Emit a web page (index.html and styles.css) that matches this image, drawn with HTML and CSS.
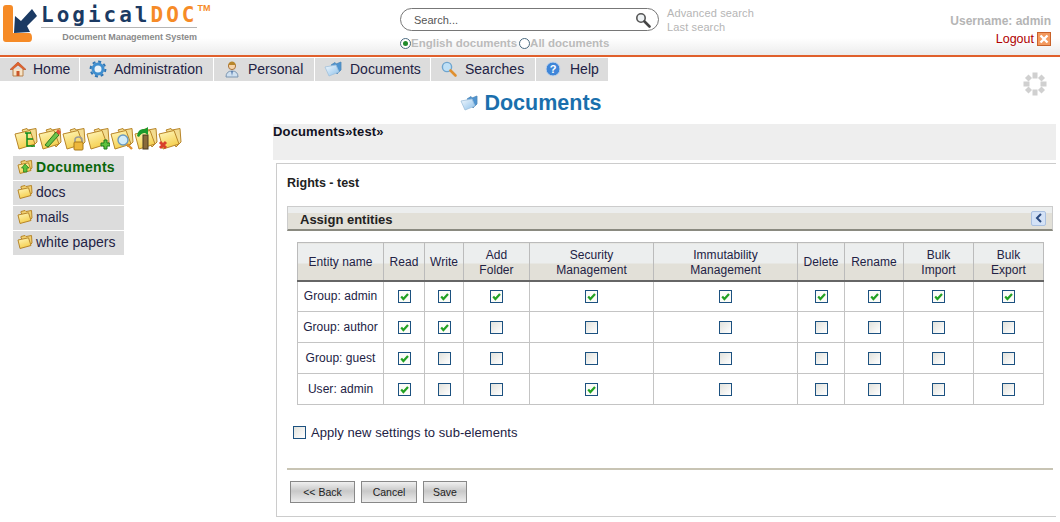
FILE: index.html
```html
<!DOCTYPE html>
<html lang="en">
<head>
    <meta charset="UTF-8">
    <title>LogicalDOC - Documents</title>
    <link rel="stylesheet" href="styles.css">
</head>
<body>
    <svg class="defs" width="0" height="0">
        <defs>
            <linearGradient id="folderFill" x1="0" y1="0" x2="0.4" y2="1">
                <stop offset="0" stop-color="#fff8c0"/>
                <stop offset="1" stop-color="#f5cf4e"/>
            </linearGradient>
            <linearGradient id="blueFill" x1="0" y1="0" x2="1" y2="1">
                <stop offset="0" stop-color="#f4f9fd"/>
                <stop offset="1" stop-color="#8cc0ea"/>
            </linearGradient>
            <symbol id="folder" viewBox="0 0 16 16">
                <path d="M4 4 L4 2.5 L8 1.5 L9 2.5 L14.5 1.5 L15 9 L12 12 Z" fill="#f0d070" stroke="#b8862a" stroke-width="1"/>
                <path d="M1 6 L11.5 3.8 L14 11.5 L3 14.5 Z" fill="url(#folderFill)" stroke="#b8862a" stroke-width="1" stroke-linejoin="round"/>
            </symbol>
            <symbol id="bigfolder" viewBox="0 0 24 24">
                <path d="M8 3 L13 1.5 L14 3 L22 1.5 L23 15 L18 20 Z" fill="#f3dc90" stroke="#b8862a"/>
                <path d="M1 7 L16 3.5 L21 17 L5 22 Z" fill="url(#folderFill)" stroke="#b8862a" stroke-linejoin="round"/>
            </symbol>
            <symbol id="bluefolder" viewBox="0 0 18 16">
                <path d="M7 4 L11 1.5 L12 3 L17 1 L17 9 L13 13 Z" fill="#4f94d0" stroke="#4f88b8" stroke-width=".8"/>
                <path d="M1 6 L12 4 L15 11 L5 15 Z" fill="url(#blueFill)" stroke="#9fc0dc" stroke-width=".8" stroke-linejoin="round"/>
            </symbol>
            <symbol id="check" viewBox="0 0 13 13">
                <path d="M3.2 6.5 L5.4 9 L10 4" fill="none" stroke="#22a122" stroke-width="2.2"/>
            </symbol>
        </defs>
    </svg>

    <header class="top">
        <div class="logo">
            <svg class="logo-mark" width="38" height="42" viewBox="0 0 38 42">
                <path d="M1 7 Q1 4 4 4 H8 Q11 4 11 7 V32 H27 Q30 32 30 37 Q30 41 27 41 H4 Q1 41 1 38 Z" fill="#f68b27"/>
                <path d="M13 15 L19 20 L30 8 L35 15 L25 25 L28 31 L12 32 Z" fill="#1b3a63"/>
            </svg>
            <div class="logo-text">
                <div class="logo-name"><span>Logical</span><span class="logo-doc">DOC</span><sup class="logo-tm">TM</sup></div>
                <div class="logo-sub">Document Management System</div>
            </div>
        </div>
        <div class="search">
            <div class="search-row">
                <div class="search-box">
                    <span>Search...</span>
                    <svg width="16" height="16" viewBox="0 0 16 16">
                        <circle cx="6" cy="6" r="4.2" fill="#eef2f4" stroke="#555" stroke-width="1.6"/>
                        <path d="M9.5 9.5 L14.5 14.5" stroke="#444" stroke-width="2.6" stroke-linecap="round"/>
                    </svg>
                </div>
                <div class="search-links">
                    <a>Advanced search</a>
                    <a>Last search</a>
                </div>
            </div>
            <div class="search-scope">
                <span class="radio on"></span><span>English documents</span>
                <span class="radio second"></span><span>All documents</span>
            </div>
        </div>
        <div class="user">
            <div class="user-name">Username: admin</div>
            <div class="logout">Logout
                <svg width="14" height="14" viewBox="0 0 14 14">
                    <rect x=".5" y=".5" width="13" height="13" fill="#f39a5e" stroke="#c9622a"/>
                    <path d="M3.5 3.5 L10.5 10.5 M10.5 3.5 L3.5 10.5" stroke="#fff" stroke-width="2.4"/>
                </svg>
            </div>
        </div>
    </header>

    <nav class="menu">
        <a class="menu-item w-home">
            <svg width="18" height="18" viewBox="0 0 18 18">
                <path d="M4 9 V16 H14 V9" fill="#f6e3c6" stroke="#b9814a"/>
                <path d="M1 9.5 L9 2 L17 9.5 L14.5 9.5 L9 5 L3.5 9.5 Z" fill="#e2632b" stroke="#b7461c" stroke-width=".6"/>
                <rect x="7.5" y="11" width="3" height="5" fill="#c9562a"/>
            </svg>
            Home</a>
        <a class="menu-item w-admin">
            <svg width="18" height="18" viewBox="0 0 18 18">
                <circle cx="9" cy="9" r="5" fill="#eaf3fa" stroke="#3f8fd0" stroke-width="3"/>
                <circle cx="9" cy="9" r="7.4" fill="none" stroke="#2e75b5" stroke-width="2" stroke-dasharray="3 2.8"/>
            </svg>
            Administration</a>
        <a class="menu-item w-personal">
            <svg width="18" height="18" viewBox="0 0 18 18">
                <path d="M3 17 Q3 11 9 11 Q15 11 15 17 Z" fill="#cfe0f0" stroke="#7b95b0"/>
                <path d="M8 11 L9 16 L10 11 Z" fill="#5a7fb0"/>
                <circle cx="9" cy="6" r="3.6" fill="#f6d3a8" stroke="#a8743c"/>
                <path d="M5.4 5 Q6 1.5 9 1.5 Q12 1.5 12.6 5 Z" fill="#b8862a"/>
            </svg>
            Personal</a>
        <a class="menu-item w-docs">
            <svg width="18" height="16" viewBox="0 0 18 16"><use href="#bluefolder"/></svg>
            Documents</a>
        <a class="menu-item w-search">
            <svg width="18" height="18" viewBox="0 0 18 18">
                <circle cx="7" cy="7" r="4.6" fill="#bfe0f6" stroke="#6fa5cf" stroke-width="1.4"/>
                <path d="M10.5 10.5 L15.5 15.5" stroke="#e09030" stroke-width="2.6" stroke-linecap="round"/>
            </svg>
            Searches</a>
        <a class="menu-item w-help">
            <svg width="16" height="16" viewBox="0 0 16 16">
                <circle cx="8" cy="8" r="7" fill="#3f86d8" stroke="#c6d6ea"/>
                <text x="8" y="11.5" class="help-mark">?</text>
            </svg>
            Help</a>
        <svg class="spinner" width="24" height="24" viewBox="0 0 24 24">
            <g fill="#d0d0d0">
                <rect x="9.5" y="0.5" width="5" height="6"/>
                <rect x="9.5" y="17.5" width="5" height="6"/>
                <rect x="0.5" y="9.5" width="6" height="5"/>
                <rect x="17.5" y="9.5" width="6" height="5"/>
                <rect x="3" y="3.5" width="5" height="5" transform="rotate(45 5.5 6)"/>
                <rect x="16" y="3.5" width="5" height="5" transform="rotate(45 18.5 6)"/>
                <rect x="3" y="15.5" width="5" height="5" transform="rotate(45 5.5 18)"/>
                <rect x="16" y="15.5" width="5" height="5" transform="rotate(45 18.5 18)"/>
            </g>
        </svg>
    </nav>

    <h1 class="title">
        <svg width="18" height="16" viewBox="0 0 18 16"><use href="#bluefolder"/></svg>
        Documents
    </h1>

    <div class="main">
        <aside class="side">
            <div class="tools">
                <svg width="24" height="24" viewBox="0 0 24 24"><use href="#bigfolder"/><path d="M11 6 H17 M13 6 V19 H21 M13 12 H19" fill="none" stroke="#0a8a1a" stroke-width="1.5"/></svg>
                <svg width="24" height="24" viewBox="0 0 24 24"><use href="#bigfolder"/><path d="M7 18 L18 5 L21 8 L10 20 Z" fill="#6cc24a" stroke="#2c7a1c"/><path d="M18 5 L20 2 L23 5 L21 8 Z" fill="#e2503a"/></svg>
                <svg width="24" height="24" viewBox="0 0 24 24"><use href="#bigfolder"/><path d="M13 16 V13 Q13 10 16.5 10 Q20 10 20 13 V16" fill="none" stroke="#999" stroke-width="1.5"/><rect x="12" y="15" width="9" height="8" rx="1" fill="#eeb83c" stroke="#a87818"/></svg>
                <svg width="24" height="24" viewBox="0 0 24 24"><use href="#bigfolder"/><path d="M15 16 H18 V13 H21 V16 H24 V19 H21 V22 H18 V19 H15 Z" fill="#5ec23c" stroke="#1c7a1c"/></svg>
                <svg width="24" height="24" viewBox="0 0 24 24"><use href="#bigfolder"/><circle cx="13" cy="13" r="5" fill="#d2ecfa" stroke="#6a9ac0" stroke-width="1.4"/><path d="M17 17 L22 22" stroke="#e09030" stroke-width="2.4"/></svg>
                <svg width="24" height="24" viewBox="0 0 24 24"><use href="#bigfolder"/><rect x="9" y="8" width="5" height="14" fill="#8a6a3a" stroke="#4a3a20"/><path d="M3 9 Q4 1 11 2 L14 0 L14 8 L11 6 Q7 6 5 10 Z" fill="#1c9a2c"/></svg>
                <svg width="24" height="24" viewBox="0 0 24 24"><use href="#bigfolder"/><path d="M2 15 L8 21 M8 15 L2 21" stroke="#d8402a" stroke-width="3"/></svg>
            </div>
            <ul class="tree">
                <li class="tree-item current">
                    <svg width="16" height="16" viewBox="0 0 16 16"><use href="#folder"/><path d="M8 5 L12 9 H10 V13 H6.5 V9 H4.5 Z" fill="#5ec23c" stroke="#1c7a1c" stroke-width=".7"/></svg>
                    Documents</li>
                <li class="tree-item"><svg width="16" height="16" viewBox="0 0 16 16"><use href="#folder"/></svg>docs</li>
                <li class="tree-item"><svg width="16" height="16" viewBox="0 0 16 16"><use href="#folder"/></svg>mails</li>
                <li class="tree-item"><svg width="16" height="16" viewBox="0 0 16 16"><use href="#folder"/></svg>white papers</li>
            </ul>
        </aside>

        <section class="content">
            <div class="crumbs">Documents»test»</div>
            <div class="panel">
                <h2 class="panel-title">Rights - test</h2>
                <div class="bar">
                    <span>Assign entities</span>
                    <span class="collapse">
                        <svg width="8" height="10" viewBox="0 0 8 10"><path d="M6 1 L2 5 L6 9" fill="none" stroke="#2a4a80" stroke-width="2"/></svg>
                    </span>
                </div>
                <table class="rights">
                    <colgroup>
                        <col class="c-name"><col class="c-read"><col class="c-write"><col class="c-add"><col class="c-sec"><col class="c-imm"><col class="c-del"><col class="c-ren"><col class="c-imp"><col class="c-exp">
                    </colgroup>
                    <thead>
                        <tr>
                            <th>Entity name</th><th>Read</th><th>Write</th><th>Add<br>Folder</th><th>Security<br>Management</th><th>Immutability<br>Management</th><th>Delete</th><th>Rename</th><th>Bulk<br>Import</th><th>Bulk<br>Export</th>
                        </tr>
                    </thead>
                    <tbody>
                        <tr>
                            <td>Group: admin</td>
                            <td><span class="box on"></span></td><td><span class="box on"></span></td><td><span class="box on"></span></td><td><span class="box on"></span></td><td><span class="box on"></span></td><td><span class="box on"></span></td><td><span class="box on"></span></td><td><span class="box on"></span></td><td><span class="box on"></span></td>
                        </tr>
                        <tr>
                            <td>Group: author</td>
                            <td><span class="box on"></span></td><td><span class="box on"></span></td><td><span class="box"></span></td><td><span class="box"></span></td><td><span class="box"></span></td><td><span class="box"></span></td><td><span class="box"></span></td><td><span class="box"></span></td><td><span class="box"></span></td>
                        </tr>
                        <tr>
                            <td>Group: guest</td>
                            <td><span class="box on"></span></td><td><span class="box"></span></td><td><span class="box"></span></td><td><span class="box"></span></td><td><span class="box"></span></td><td><span class="box"></span></td><td><span class="box"></span></td><td><span class="box"></span></td><td><span class="box"></span></td>
                        </tr>
                        <tr>
                            <td>User: admin</td>
                            <td><span class="box on"></span></td><td><span class="box"></span></td><td><span class="box"></span></td><td><span class="box on"></span></td><td><span class="box"></span></td><td><span class="box"></span></td><td><span class="box"></span></td><td><span class="box"></span></td><td><span class="box"></span></td>
                        </tr>
                    </tbody>
                </table>
                <label class="apply"><span class="box"></span>Apply new settings to sub-elements</label>
                <div class="actions">
                    <button class="btn btn-back">&lt;&lt; Back</button>
                    <button class="btn btn-cancel">Cancel</button>
                    <button class="btn btn-save">Save</button>
                </div>
            </div>
        </section>
    </div>

    <script>
        // Checkmarks are the same svg everywhere, fill them in here
        var boxes = document.querySelectorAll('.box.on');
        for (var i = 0; i < boxes.length; i++) {
            boxes[i].innerHTML = '<svg width="13" height="13" viewBox="0 0 13 13"><use href="#check"/></svg>';
        }
    </script>
</body>
</html>
```
FILE: styles.css
```css
* {
    box-sizing: border-box;
}

body {
    margin: 0;
    font-family: "Liberation Sans", Arial, sans-serif;
    font-size: 12px;
    color: #222244;
    background: #fff;
    overflow: hidden;
}

.defs {
    position: absolute;
}

/* Header */
.top {
    height: 57px;
    display: flex;
    border-bottom: 2px solid #e0602c;
    background: linear-gradient(to bottom, #fff 0, #fff 38px, #ececec 55px);
}

.logo {
    width: 400px;
    display: flex;
    padding: 1px 0 0 2px;
}

.logo-mark {
    flex: none;
}

.logo-text {
    padding: 2px 0 0 1px;
}

.logo-name {
    font-family: "DejaVu Sans Mono", monospace;
    font-weight: bold;
    font-size: 21px;
    line-height: 20px;
    letter-spacing: 3px;
    color: #1b3a63;
    width: 156px;
    white-space: nowrap;
    border-bottom: 1px solid #b5b5b5;
    height: 25px;
    padding-top: 2px;
}

.logo-doc {
    color: #f68b27;
}

.logo-tm {
    font-family: "Liberation Sans", sans-serif;
    font-size: 9px;
    font-weight: bold;
    letter-spacing: 0;
    color: #f68b27;
    vertical-align: 11px;
    line-height: 0;
}

.logo-sub {
    font-size: 9px;
    font-weight: bold;
    letter-spacing: -0.05px;
    color: #8a8a8a;
    text-align: right;
    width: 156px;
    line-height: 12px;
    margin-top: 3px;
}

.search {
    width: 500px;
    padding-top: 8px;
}

.search-row {
    display: flex;
    gap: 8px;
}

.search-box {
    width: 259px;
    height: 23px;
    border: 1px solid #777;
    border-radius: 12px;
    padding: 0 7px 0 13px;
    display: flex;
    align-items: center;
    justify-content: space-between;
    font-size: 11px;
    color: #555;
    background: #fff;
}

.search-links {
    display: flex;
    flex-direction: column;
    font-size: 11px;
    letter-spacing: 0.13px;
    line-height: 14px;
    margin-top: -2px;
    color: #b5b5b5;
}

.search-scope {
    display: flex;
    align-items: center;
    margin-top: 3px;
    font-size: 11.5px;
    font-weight: bold;
    color: #bbb;
}

.radio {
    width: 11px;
    height: 11px;
    border: 1px solid #4a6a80;
    border-radius: 50%;
    background: #fff;
    position: relative;
}

.radio.second {
    margin-left: 2px;
}

.radio.on::after {
    content: "";
    position: absolute;
    left: 2px;
    top: 2px;
    width: 5px;
    height: 5px;
    border-radius: 50%;
    background: #1f8a2c;
}

.user {
    flex: 1;
    text-align: right;
    padding: 13px 9px 0 0;
}

.user-name {
    font-weight: bold;
    color: #b5b5b5;
    line-height: 16px;
}

.logout {
    display: flex;
    justify-content: flex-end;
    align-items: center;
    gap: 3px;
    font-size: 12.5px;
    color: #b00000;
    line-height: 18px;
    margin-top: 1px;
}

/* Main menu */
.menu {
    height: 23px;
    margin-top: 1px;
    display: flex;
    gap: 1px;
    position: relative;
}

.menu-item {
    background: #dcdcdc;
    font-size: 14px;
    display: flex;
    align-items: center;
    gap: 6px;
    padding: 0 0 1px 9px;
}

.w-home { width: 79px; }
.w-admin { width: 133px; gap: 7px; }
.w-personal { width: 100px; gap: 7px; }
.w-docs { width: 115px; gap: 8px; }
.w-search { width: 104px; gap: 7px; }
.w-help { width: 72px; gap: 9px; }

.help-mark {
    font-size: 11px;
    font-weight: bold;
    fill: #fff;
    text-anchor: middle;
}

.spinner {
    position: absolute;
    right: 13px;
    top: 14px;
}

.title {
    margin: 9px 0 0;
    padding-left: 2px;
    height: 26px;
    text-align: center;
    font-size: 21.5px;
    line-height: 26px;
    font-weight: bold;
    color: #1a6fad;
}

.title svg {
    vertical-align: -1px;
}

/* Columns under the title */
.main {
    display: flex;
    margin-top: 8px;
}

.side {
    width: 273px;
    flex: none;
    padding: 3px 0 0 13px;
}

.tools {
    display: flex;
    height: 24px;
    padding-left: 1px;
}

.tree {
    list-style: none;
    margin: 5px 0 0;
    padding: 0;
    width: 111px;
}

.tree-item {
    height: 24px;
    margin-bottom: 1px;
    background: #dcdcdc;
    display: flex;
    align-items: center;
    gap: 3px;
    padding: 0 0 2px 4px;
    font-size: 14px;
}

.tree-item.current {
    font-weight: bold;
    letter-spacing: 0.3px;
    color: #0a660a;
}

.content {
    width: 783px;
    flex: none;
}

.crumbs {
    height: 36px;
    background: #eeeeee;
    font-size: 13px;
    letter-spacing: 0.15px;
    font-weight: bold;
    color: #112;
}

.panel {
    margin: 3px 0 0 3px;
    height: 354px;
    border: 1px solid #ccc;
    border-right: none;
    padding: 0 3px 0 10px;
}

.panel-title {
    margin: 11px 0 0;
    height: 16px;
    font-size: 12.5px;
    line-height: 16px;
    font-weight: bold;
    color: #222;
}

.bar {
    margin-top: 15px;
    height: 25px;
    border: 1px solid #ccc;
    border-bottom: 2px solid #8a8a80;
    background: linear-gradient(to bottom, #eceeee 0, #eceeee 6px, #e2e0d8 6px);
    display: flex;
    align-items: center;
    justify-content: space-between;
    padding: 3px 0 0 12px;
    font-size: 13px;
    font-weight: bold;
    color: #222;
}

.collapse {
    width: 15px;
    height: 15px;
    margin: -3px 6px 0 0;
    border: 1px solid #aac0e0;
    border-radius: 2px;
    background: #d4e2f6;
    display: flex;
    align-items: center;
    justify-content: center;
}

/* Rights table */
.rights {
    margin: 11px 0 0 10px;
    width: 746px;
    table-layout: fixed;
    border-collapse: collapse;
    border: 1px solid #aaa;
    text-align: center;
    letter-spacing: 0.05px;
}

.c-name { width: 86px; }
.c-read { width: 41px; }
.c-write { width: 39px; }
.c-add { width: 66px; }
.c-sec { width: 124px; }
.c-imm { width: 144px; }
.c-del { width: 47px; }
.c-ren { width: 59px; }
.c-imp { width: 70px; }
.c-exp { width: 70px; }

.rights th {
    height: 38px;
    padding: 3px 0 0;
    font-weight: normal;
    line-height: 15px;
    border: 1px solid #bbb;
    border-bottom: 2px solid #666;
    background: linear-gradient(to bottom, #eceeee 0, #eceeee 20px, #e2e0d8 20px);
}

.rights td {
    height: 31px;
    padding: 0 0 1px;
    border: 1px solid #c4c4c4;
}

.box {
    display: inline-block;
    vertical-align: middle;
    width: 13px;
    height: 13px;
    border: 1px solid #1c5180;
    background: linear-gradient(135deg, #e2e2dc, #fff);
    position: relative;
}

.box.on {
    background: #fcfcf8;
}

.box svg {
    position: absolute;
    left: -1px;
    top: -1px;
}

.apply {
    display: flex;
    align-items: center;
    gap: 5px;
    margin: 18px 0 0 6px;
    font-size: 13px;
    letter-spacing: 0.06px;
    height: 18px;
}

.actions {
    margin-top: 27px;
    border-top: 2px solid #c8c4b4;
    padding: 11px 0 0 3px;
    display: flex;
    gap: 6px;
}

.btn {
    height: 22px;
    padding: 0;
    font-family: inherit;
    font-size: 10.5px;
    color: #222;
    border: 1px solid #888;
    background: linear-gradient(to bottom, #f0f0f0, #c8c8c8 45%, #ececec);
}

.btn-back { width: 65px; }
.btn-cancel { width: 56px; }
.btn-save { width: 44px; }
```
